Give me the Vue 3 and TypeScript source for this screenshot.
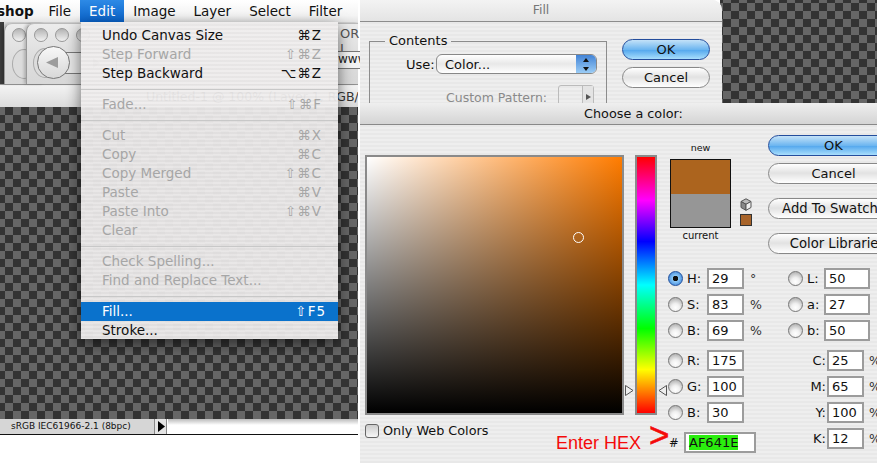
<script setup lang="ts">
interface MenuEntry { label?: string; keys?: string; off?: boolean; sep?: boolean; on?: boolean }
const menus = ['File', 'Edit', 'Image', 'Layer', 'Select', 'Filter']
const entries: MenuEntry[] = [
  { label: 'Undo Canvas Size', keys: '⌘Z' },
  { label: 'Step Forward', keys: '⇧⌘Z', off: true },
  { label: 'Step Backward', keys: '⌥⌘Z' },
  { sep: true },
  { label: 'Fade...', keys: '⇧⌘F', off: true },
  { sep: true },
  { label: 'Cut', keys: '⌘X', off: true },
  { label: 'Copy', keys: '⌘C', off: true },
  { label: 'Copy Merged', keys: '⇧⌘C', off: true },
  { label: 'Paste', keys: '⌘V', off: true },
  { label: 'Paste Into', keys: '⇧⌘V', off: true },
  { label: 'Clear', off: true },
  { sep: true },
  { label: 'Check Spelling...', off: true },
  { label: 'Find and Replace Text...', off: true },
  { sep: true },
  { label: 'Fill...', keys: '⇧F5', on: true },
  { label: 'Stroke...' },
]
const leftFields = [
  { k: 'H', v: '29', u: '°', on: true },
  { k: 'S', v: '83', u: '%' },
  { k: 'B', v: '69', u: '%' },
  { k: 'R', v: '175', u: '', gap: true },
  { k: 'G', v: '100', u: '' },
  { k: 'B', v: '30', u: '' },
]
const labFields = [{ k: 'L', v: '50' }, { k: 'a', v: '27' }, { k: 'b', v: '50' }]
const cmykFields = [{ k: 'C', v: '25' }, { k: 'M', v: '65' }, { k: 'Y', v: '100' }, { k: 'K', v: '12' }]
</script>

<template>
  <div class="stage">
    <section class="ps">
      <div class="menubar">
        <b class="app">shop</b>
        <span v-for="m in menus" :key="m" class="mtitle" :class="{ active: m === 'Edit' }">{{ m }}</span>
      </div>
      <div class="chrome">
        <div class="win win-a"><i class="dot"></i><i class="nav"></i></div>
        <div class="win win-b">
          <div class="dots"><i class="dot"></i><i class="dot"></i><i class="dot"></i></div>
          <i class="nav behind"></i>
          <i class="segment"><svg width="8" height="12" viewBox="0 0 8 12"><path d="M1 6 8 1V11Z" fill="#aaa" transform="rotate(180 4 6)"/></svg></i>
          <i class="nav big"><svg width="13" height="13" viewBox="0 0 13 13"><path d="M0 6.500 12 1V12Z" fill="#9c9c9c"/></svg></i>
          <span class="ghost g1">OR I</span>
          <span class="ghost g2">www</span>
        </div>
      </div>
      <div class="doc-title">Untitled-1 @ 100% (Layer 1, RGB/</div>
      <div class="canvas checker"></div>
      <div class="status">
        <span class="status-text">sRGB IEC61966-2.1 (8bpc)</span>
        <span class="status-btn"><svg width="8" height="11" viewBox="0 0 8 11"><path d="M1 0 8 5.500 1 11Z" fill="#000"/></svg></span>
        <span class="status-rest"></span>
      </div>
    </section>

    <ul class="menu">
      <template v-for="(e, i) in entries" :key="i">
        <li v-if="e.sep" class="sep"></li>
        <li v-else class="item" :class="{ off: e.off, on: e.on }">
          <span>{{ e.label }}</span><span class="keys">{{ e.keys }}</span>
        </li>
      </template>
    </ul>

    <div class="checker corner"></div>

    <section class="fill">
      <header class="fill-title">Fill</header>
      <div class="fill-body">
        <fieldset class="contents">
          <legend>Contents</legend>
          <div class="use-row">
            <label>Use:</label>
            <div class="select">
              <span>Color...</span>
              <i class="stepper"><svg width="8" height="15" viewBox="0 0 8 15"><path d="M4 1 7 5H1ZM4 14 1 10H7Z" fill="#111"/></svg></i>
            </div>
          </div>
          <div class="pattern-row">
            <label>Custom Pattern:</label>
            <div class="pattern"><i><svg width="5" height="6" viewBox="0 0 5 6"><path d="M0 0 5 3 0 6Z" fill="#555"/></svg></i></div>
          </div>
        </fieldset>
        <div class="btns">
          <button class="aqua primary">OK</button>
          <button class="aqua">Cancel</button>
        </div>
      </div>
    </section>

    <section class="picker">
      <header class="picker-title">Choose a color:</header>
      <div class="picker-body">
        <div class="col-spectrum">
          <div class="spectrum">
            <div class="square"><i class="ring"></i></div>
            <div class="hue">
              <svg class="tri tl" width="9" height="11" viewBox="0 0 9 11"><path d="M.5 .5 8 5.500 .5 10.500Z" fill="#eee" stroke="#555"/></svg>
              <svg class="tri tr" width="9" height="11" viewBox="0 0 9 11"><path d="M8.500 .5 1 5.500 8.500 10.500Z" fill="#eee" stroke="#555"/></svg>
            </div>
          </div>
          <label class="web"><i class="check"></i>Only Web Colors</label>
        </div>

        <div class="col-controls">
          <div class="upper">
            <div class="preview-wrap">
              <div class="cap">new</div>
              <div class="preview-row">
                <div class="preview"><i class="new"></i><i class="cur"></i></div>
                <div class="warn">
                  <svg width="12" height="13" viewBox="0 0 12 13"><path d="M6 .8 11 3.500 6 6.300 1 3.500Z" fill="#bbb" stroke="#555"/><path d="M1 3.500 6 6.300V12.300L1 9.500Z" fill="#888" stroke="#555"/><path d="M11 3.500 6 6.300V12.300L11 9.500Z" fill="#eee" stroke="#555"/></svg>
                  <i class="mini"></i>
                </div>
              </div>
              <div class="cap cap-cur">current</div>
            </div>
            <div class="side-btns">
              <button class="aqua primary">OK</button>
              <button class="aqua">Cancel</button>
              <button class="aqua wide gap1">Add To Swatches</button>
              <button class="aqua wide gap2">Color Libraries</button>
            </div>
          </div>

          <div class="lower">
            <div class="fields-left">
              <div v-for="f in leftFields" :key="f.k + f.v" class="frow" :class="{ spaced: f.gap }">
                <i class="radio" :class="{ sel: f.on }"></i>
                <label class="flabel">{{ f.k }}:</label>
                <span class="input w37">{{ f.v }}</span>
                <span class="unit">{{ f.u }}</span>
              </div>
              <div class="hex-row">
                <span class="enter">Enter HEX</span>
                <span class="gt">&gt;</span>
                <span class="hash">#</span>
                <span class="input hex"><mark>AF641E</mark></span>
              </div>
            </div>
            <div class="fields-right">
              <div v-for="f in labFields" :key="f.k" class="frow">
                <i class="radio"></i>
                <label class="flabel lab">{{ f.k }}:</label>
                <span class="input w46">{{ f.v }}</span>
              </div>
              <div v-for="(f, i) in cmykFields" :key="f.k" class="frow cmyk" :class="{ spaced: i === 0 }">
                <label class="flabel cm">{{ f.k }}:</label>
                <span class="input w37">{{ f.v }}</span>
                <span class="unit">%</span>
              </div>
            </div>
          </div>
        </div>
      </div>
    </section>
  </div>
</template>

<style>
html, body { margin: 0; background: #fff; }
</style>

<style scoped>
.stage { position: relative; width: 877px; height: 463px; overflow: hidden; background: #fff; font-family: "DejaVu Sans", sans-serif; color: #111; }
.checker {
  background-color: #666;
  background-image: conic-gradient(#333 25%, #666 0 50%, #333 0 75%, #666 0);
  background-size: 16px 16px;
}
.ps { position: absolute; left: 0; top: 0; width: 358px; height: 435px; display: flex; flex-direction: column; }
.menubar { height: 22px; display: flex; align-items: center; background: linear-gradient(#fff, #f4f4f4 70%, #e4e4e4); font-size: 13.500px; flex: none; position: relative; z-index: 3; white-space: nowrap; }
.app { width: 39.500px; font-size: 13.500px; text-indent: -3px; flex: none; }
.mtitle { padding: 0 9px; line-height: 22px; }
.mtitle.active { background: linear-gradient(#2d8ae6, #0a62c8); color: #fff; }
.chrome { height: 62px; flex: none; position: relative; background: linear-gradient(90deg, #3c3c3c 4px, #dcdcdc 4px); }
.win { position: absolute; top: 1px; bottom: 0; background: linear-gradient(#ececec, #dedede 55%, #d8d8d8); border-radius: 8px 0 0 0; border-left: 1px solid #999; border-top: 1px solid #bbb; box-sizing: border-box; box-shadow: -2px 0 3px rgba(0, 0, 0, .2); }
.win-a { left: 4px; width: 40px; }
.win-b { left: 26px; width: 332px; }
.win-a .dot { position: absolute; left: 7px; top: 4px; }
.win-a .nav { position: absolute; left: 7px; top: 25px; }
.dots { display: flex; gap: 7px; margin: 4px 0 0 7px; }
.dot { display: block; width: 14px; height: 14px; border-radius: 50%; border: 1px solid #999; background: linear-gradient(#b4b4b4, #f2f2f2); box-sizing: border-box; }
.nav { display: block; width: 24px; height: 30px; border-radius: 50%; border: 1px solid #aaa; background: #dcdcdc; box-sizing: border-box; }
.nav.behind { position: absolute; left: 6px; top: 24px; }
.nav.big { position: absolute; left: 10px; top: 22px; width: 33px; height: 33px; background: linear-gradient(#f8f8f8, #d8d8d8); border-color: #777; display: flex; align-items: center; justify-content: center; padding-right: 3px; }
.segment { position: absolute; left: 30px; top: 28px; width: 60px; height: 22px; border: 1px solid #777; border-left: 0; box-sizing: border-box; background: #e6e6e6; display: flex; align-items: center; justify-content: center; padding-left: 20px; }
.ghost { position: absolute; font-size: 13px; color: #555; }
.g1 { left: 313px; top: 2px; }
.g2 { left: 311px; top: 27px; font-size: 12px; width: 30px; height: 16px; line-height: 15px; border-top: 1px solid #777; border-bottom: 1px solid #777; background: #f4f4f4; color: #222; }
.doc-title { height: 23px; flex: none; background: linear-gradient(#f4f4f4, #dcdcdc); font-size: 12.500px; line-height: 23px; padding-left: 146px; white-space: nowrap; overflow: hidden; color: #333; box-sizing: border-box; border-top: 1px solid #999; }
.canvas { flex: 1; background-position: -3px 0; }
.status { height: 15px; flex: none; display: flex; border-bottom: 1px solid #111; background: #fff; box-sizing: content-box; }
.status-text { width: 154px; background: #d6d6d6; font-size: 9px; line-height: 15px; padding-left: 11px; box-sizing: border-box; white-space: nowrap; }
.status-btn { width: 13px; background: #e4e4e4; border-left: 1px solid #888; border-right: 1px solid #888; display: flex; align-items: center; justify-content: center; box-sizing: border-box; }
.status-rest { flex: 1; background: linear-gradient(#bbb, #fff 40%); margin-left: 1px; }

.menu { position: absolute; left: 81px; top: 22px; width: 257px; height: 317px; margin: 0; padding: 4px 0 0; box-sizing: border-box; list-style: none; background: repeating-linear-gradient(rgba(240, 238, 238, .95) 0 2px, rgba(232, 230, 230, .95) 2px 4px); box-shadow: 0 5px 14px rgba(0, 0, 0, .55); font-size: 13.500px; z-index: 4; }
.item { height: 19px; line-height: 18px; padding: 0 16px 0 21px; display: flex; justify-content: space-between; white-space: nowrap; }
.item.off { color: #a6a6a6; }
.item.on { background: #0a72cc; color: #fff; padding-right: 12px; }
.keys { font-size: 13.500px; letter-spacing: 1px; }
.sep { height: 1px; background: #c8c8c8; margin: 6px 0 5px; }

.corner { position: absolute; left: 720px; top: 0; width: 157px; height: 104px; background-position: -5px 3px; }

.fill { position: absolute; left: 360px; top: 0; width: 362px; height: 104px; overflow: hidden; border-radius: 0 10px 0 0; background: repeating-linear-gradient(#eeeeee 0 2px, #e8e8e8 2px 4px); }
.fill-title { height: 21px; line-height: 20px; text-align: center; font-size: 12.500px; color: #777; border-bottom: 1px solid #8c8c8c; background: linear-gradient(#f3f3f3, #e4e4e4); }
.fill-body { display: flex; padding: 10px 0 0 9px; }
.contents { width: 238px; height: 90px; box-sizing: border-box; margin: 0; padding: 0 0 0 11px; border: 1px solid #8c8c8c; flex: none; }
.contents legend { font-size: 13px; padding: 0 4px; margin-left: 4px; line-height: 18px; }
.use-row { display: flex; align-items: center; margin-top: 4px; font-size: 13px; padding-left: 25px; }
.use-row label { width: 30px; flex: none; }
.select { width: 161px; height: 20px; box-sizing: border-box; border: 1px solid #888; border-radius: 6px; background: linear-gradient(#fff, #e8e8e8 50%, #fff); display: flex; align-items: center; justify-content: space-between; padding-left: 8px; overflow: hidden; position: relative; }
.stepper { width: 20px; height: 20px; background: linear-gradient(#3d7fd4, #9fd0f7); display: flex; align-items: center; justify-content: center; }
.pattern-row { display: flex; align-items: flex-start; margin-top: 11px; font-size: 12.500px; color: #8a8a8a; }
.pattern-row label { margin-left: 65px; width: 112px; margin-top: 5px; white-space: nowrap; }
.pattern { width: 36px; height: 24px; border: 1px solid #bbb; border-radius: 3px; box-sizing: border-box; position: relative; }
.pattern i { position: absolute; right: 0; top: 0; bottom: 0; width: 10px; border-left: 1px solid #bbb; background: #e4e4e4; display: flex; align-items: center; justify-content: center; }
.btns { display: flex; flex-direction: column; gap: 7px; margin: 7px 0 0 15px; }
.aqua { display: block; width: 88px; height: 21px; padding: 0; box-sizing: border-box; border: 1px solid #888; border-radius: 11px; font: 13px "DejaVu Sans", sans-serif; color: #111; background: linear-gradient(#fff, #e2e2e2 48%, #f4f4f4 80%, #fff); white-space: nowrap; line-height: 18px; }
.aqua.primary { border-color: #244d9c; background: linear-gradient(#c4e2f8, #6db6f0 50%, #58aaee 55%, #a8defc); }

.picker { position: absolute; left: 360px; top: 103px; width: 517px; height: 360px; background: repeating-linear-gradient(#eeeeee 0 2px, #e8e8e8 2px 4px); }
.picker-title { height: 21px; line-height: 21px; text-align: center; font-size: 12.800px; background: linear-gradient(#efefef, #d4d4d4); border-bottom: 1px solid #888; padding-left: 30px; }
.picker-body { display: flex; }
.col-spectrum { margin: 30px 0 0 5px; width: 304px; flex: none; }
.spectrum { display: flex; gap: 11px; }
.square { position: relative; width: 259px; height: 260px; box-sizing: border-box; border: 2px solid #8a8a8a; background: linear-gradient(transparent, #000), linear-gradient(90deg, #fff, #ff7c00); }
.ring { position: absolute; left: 206px; top: 75px; width: 11px; height: 11px; border: 1px solid #fff; border-radius: 50%; box-sizing: border-box; }
.hue { position: relative; width: 22px; height: 260px; box-sizing: border-box; border: 2px solid #8a8a8a; background: linear-gradient(#f00, #f0f 17%, #00f 33%, #0ff 50%, #0f0 67%, #ff0 83%, #f00); }
.tri { position: absolute; top: 228px; }
.tl { left: -12px; }
.tr { left: 21px; }
.web { display: flex; align-items: center; margin-top: 7px; font-size: 12.800px; line-height: 18px; }
.check { width: 14px; height: 14px; border: 1px solid #666; border-radius: 3px; margin-right: 4px; background: linear-gradient(#ccc, #f6f6f6); box-sizing: border-box; }
.col-controls { flex: 1; margin-top: 8px; min-width: 0; }
.upper { display: flex; height: 135px; }
.preview-wrap { width: 99px; flex: none; }
.cap { width: 61px; text-align: center; font-size: 9.500px; line-height: 12px; margin: 9px 0 5px; padding-left: 1px; }
.cap-cur { margin: 2px 0 0; font-size: 10px; }
.preview-row { display: flex; align-items: flex-end; gap: 9px; }
.preview { width: 61px; height: 69px; box-sizing: border-box; border: 1px solid #111; display: flex; flex-direction: column; margin-left: 1px; }
.new { flex: 35; background: #ac641e; }
.cur { flex: 34; background: #969696; }
.warn { display: flex; flex-direction: column; gap: 3px; margin-bottom: 2px; }
.warn svg { display: block; }
.mini { display: block; width: 12px; height: 12px; border: 1px solid #333; background: #a8642a; box-sizing: border-box; }
.side-btns { display: flex; flex-direction: column; width: 120px; flex: none; margin-top: 2px; gap: 7px; }
.side-btns .aqua { width: 131px; flex: none; }
.side-btns .wide { width: 139px; margin-top: 7px; font-size: 13.200px; }
.lower { display: flex; }
.fields-left { width: 119px; flex: none; }
.frow { display: flex; align-items: center; height: 21px; margin-bottom: 5px; font-size: 13px; }
.frow.spaced { margin-top: 9px; }
.radio { display: block; width: 15px; height: 15px; border: 1px solid #777; border-radius: 50%; box-sizing: border-box; background: radial-gradient(circle at 50% 75%, #fff, #f0f0f0 35%, #aaa 90%); flex: none; margin-left: -1px; }
.radio.sel { border-color: #1f4f9c; background: radial-gradient(circle, #111 0 2.500px, #8ac8f8 3px, #2f76d2); }
.flabel { width: 24px; padding-left: 4px; box-sizing: border-box; flex: none; }
.input { display: block; height: 21px; box-sizing: border-box; border: 2px solid #9c9c9c; background: #fff; line-height: 17px; padding-left: 3px; flex: none; font-size: 13px; }
.w37 { width: 37px; }
.w46 { width: 46px; }
.unit { margin-left: 6px; width: 12px; color: #333; font-size: 12.500px; }
.hex-row { display: flex; align-items: center; height: 21px; margin-top: 9px; position: relative; }
.enter { position: absolute; left: -113px; top: 1px; color: #f40a0a; font: 18px "Liberation Sans", sans-serif; white-space: nowrap; }
.gt { position: absolute; left: -20px; top: -16px; color: #f40a0a; font: 35px/38px "Liberation Sans", sans-serif; -webkit-text-stroke: .6px #f40a0a; }
.hash { width: 15px; font-size: 11.500px; text-align: left; }
.hex { width: 72px; }
.hex mark { background: #2bee0e; color: #111; }
.fields-right { flex: 1; min-width: 0; padding-left: 1px; }
.lab { width: 21px; padding-left: 4px; }
.frow.cmyk .flabel { width: 38px; text-align: right; padding: 0 1px 0 0; }
.frow.cmyk .unit { margin-left: 5px; }
</style>
